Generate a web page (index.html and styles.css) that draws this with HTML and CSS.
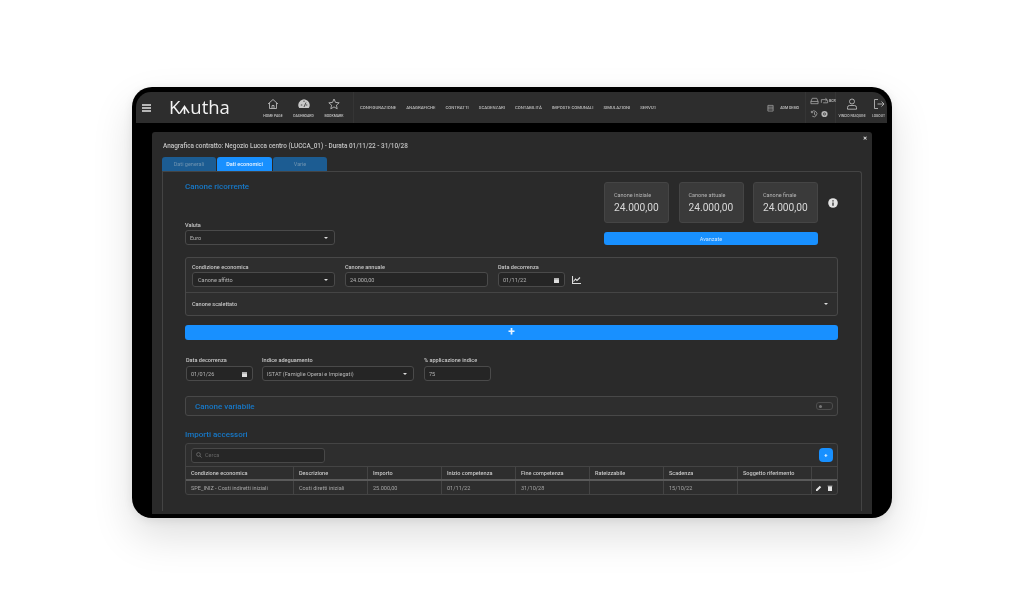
FILE: index.html
```html
<!DOCTYPE html>
<html lang="it">
<head>
<meta charset="utf-8">
<title>Kautha</title>
<link rel="stylesheet" href="styles.css">
</head>
<body>
<div class="device">
<div class="screen">
  <header class="nav">
    <svg class="burger" viewBox="0 0 9 8"><path d="M0 1h9M0 4h9M0 7h9"/></svg>
    <div class="logo"><span>K</span><svg class="logo-arrow" viewBox="0 0 12 11"><path d="M1 10 6 2.500 11 10M6 3v8"/></svg><span>utha</span></div>
    <div class="quick">
      <div class="qi"><svg viewBox="0 0 12 12"><path d="M1 6 6 1.500 11 6M2.500 5v5.500h7V5M5 10.500V7.500h2v3"/></svg><span>HOME PAGE</span></div>
      <div class="qi"><svg class="gauge" viewBox="0 0 12 12"><path class="fill" d="M1.200 10a5.600 5.600 0 1 1 9.600 0z"/><path class="mark" d="M6 9 8 4.500M2.800 7h1.500M7.800 7h1.500M6 2.600v1.400"/></svg><span>DASHBOARD</span></div>
      <div class="qi"><svg viewBox="0 0 12 12"><path d="M6 1l1.500 3.400 3.700.4-2.800 2.400.8 3.600L6 8.900l-3.200 1.900.8-3.600L.8 4.800l3.700-.4z"/></svg><span>BOOKMARK</span></div>
    </div>
    <nav class="menu">
      <a>CONFIGURAZIONE</a><a>ANAGRAFICHE</a><a>CONTRATTI</a><a>SCADENZARI</a><a>CONTABILITÀ</a><a>IMPOSTE COMUNALI</a><a>SIMULAZIONI</a><a>SERVIZI</a>
    </nav>
    <div class="adm"><svg viewBox="0 0 8 9"><path d="M1 1.500h6v6.500H1zM1 3.500h6M1 5.500h6"/></svg><span>ADM DEMO</span></div>
    <div class="tools">
      <div class="tool-row">
        <svg viewBox="0 0 10 8"><path d="M1 4.500 2.500 1h5L9 4.500V7H1zM1 4.500h8"/></svg>
        <svg viewBox="0 0 10 8"><path d="M1.500 6V2.500h6M6 1l2 1.500L6 4M8.500 3v3h-5"/></svg>
        <b>BCR</b>
      </div>
      <div class="tool-row">
        <svg viewBox="0 0 9 9"><path d="M1.500 2A3.300 3.300 0 1 1 2 7M1 1v2h2M4.500 2.500v2.500l1.500 1"/></svg>
        <svg viewBox="0 0 9 9"><circle class="fill" cx="4.500" cy="4.500" r="3.500"/><circle class="mark" cx="4.500" cy="4.500" r="1.200"/></svg>
      </div>
    </div>
    <div class="user qi"><svg viewBox="0 0 12 12"><circle cx="6" cy="3.500" r="2.500"/><path d="M1.500 11.200V9.500a2 2 0 0 1 2-2h5a2 2 0 0 1 2 2v1.700z"/></svg><span>VINCIO PASQUINI</span></div>
    <div class="logout qi"><svg viewBox="0 0 12 12"><path d="M5 1.500H1.500v9H5M4.500 6H11M8.500 3.500 11 6 8.500 8.500"/></svg><span>LOGOUT</span></div>
  </header>

  <main class="content">
    <section class="modal">
      <div class="modal-head">
        <h1>Anagrafica contratto: Negozio Lucca centro (LUCCA_01) - Durata 01/11/22 - 31/10/28</h1>
        <span class="close">✕</span>
      </div>
      <div class="tabs">
        <span class="tab t1">Dati generali</span>
        <span class="tab on">Dati economici</span>
        <span class="tab t3">Varie</span>
      </div>
      <div class="panel">
        <div class="top">
          <div class="top-left">
            <h2>Canone ricorrente</h2>
            <div class="field valuta">
              <label>Valuta</label>
              <div class="ctl"><span>Euro</span><i class="caret"></i></div>
            </div>
          </div>
          <div class="top-right">
            <div class="kpis">
              <div class="kpi"><small>Canone iniziale</small><strong>24.000,00</strong></div>
              <div class="kpi"><small>Canone attuale</small><strong>24.000,00</strong></div>
              <div class="kpi"><small>Canone finale</small><strong>24.000,00</strong></div>
            </div>
            <button class="adv">Avanzate</button>
          </div>
          <svg class="info" viewBox="0 0 10 10"><circle cx="5" cy="5" r="4.800" fill="#e4e4e4"/><path d="M5 2.200v1.200M5 4.400v3.400" stroke="#2a2a2a" stroke-width="1.300"/></svg>
        </div>

        <div class="cond">
          <div class="cond-row">
            <div class="field w143">
              <label>Condizione economica</label>
              <div class="ctl pad"><span>Canone affitto</span><i class="caret"></i></div>
            </div>
            <div class="field w143">
              <label>Canone annuale</label>
              <div class="ctl"><span>24.000,00</span></div>
            </div>
            <div class="field w67">
              <label>Data decorrenza</label>
              <div class="ctl"><span>01/11/22</span><svg class="cal" viewBox="0 0 6 7"><path d="M0 1h6v6H0z" fill="#ddd"/><path d="M0 2.200h6" stroke="#2a2a2a" stroke-width=".5"/></svg></div>
            </div>
            <svg class="chart" viewBox="0 0 9 8"><path d="M.5 0v7.500H9M1.500 5.500 3.500 3l1.500 1.500L8 1.500"/></svg>
          </div>
          <div class="cond-foot"><span>Canone scalettato</span><i class="caret"></i></div>
        </div>

        <button class="plus">+</button>

        <div class="adj">
          <div class="field w67">
            <label>Data decorrenza</label>
            <div class="ctl"><span>01/01/26</span><svg class="cal" viewBox="0 0 6 7"><path d="M0 1h6v6H0z" fill="#ddd"/><path d="M0 2.200h6" stroke="#2a2a2a" stroke-width=".5"/></svg></div>
          </div>
          <div class="field w152">
            <label>Indice adeguamento</label>
            <div class="ctl"><span>ISTAT (Famiglie Operai e Impiegati)</span><i class="caret"></i></div>
          </div>
          <div class="field w67">
            <label>% applicazione indice</label>
            <div class="ctl"><span>75</span></div>
          </div>
        </div>

        <div class="variable"><h3>Canone variabile</h3><span class="toggle"><i></i></span></div>

        <h2 class="acc">Importi accessori</h2>
        <div class="tbox">
          <div class="tbar">
            <div class="search"><svg viewBox="0 0 8 8"><circle cx="3.300" cy="3.300" r="2.500"/><path d="M5.200 5.200 7.500 7.500"/></svg><span>Cerca</span></div>
            <button class="add">+</button>
          </div>
          <div class="grid head">
            <span>Condizione economica</span><span>Descrizione</span><span>Importo</span><span>Inizio competenza</span><span>Fine competenza</span><span>Rateizzabile</span><span>Scadenza</span><span>Soggetto riferimento</span><span></span>
          </div>
          <div class="grid row">
            <span>SPE_INIZ - Costi indiretti iniziali</span><span>Costi diretti iniziali</span><span>25.000,00</span><span>01/11/22</span><span>31/10/28</span><span></span><span>15/10/22</span><span></span>
            <span class="acts">
              <svg viewBox="0 0 6 6"><path d="M0 6V4.600L3.800.8l1.400 1.400L1.400 6z" fill="#e4e4e4"/></svg>
              <svg viewBox="0 0 6 6"><path d="M1 1.500h4V6H1zM.5.700h5v.5h-5z" fill="#e4e4e4"/></svg>
            </span>
          </div>
        </div>
      </div>
    </section>
  </main>
</div>
</div>
</body>
</html>
```
FILE: styles.css
```css
* { box-sizing: border-box; }
html, body { margin: 0; height: 606px; overflow: hidden; background: #fff; }
body { padding: 87px 132px 0; font-family: Roboto, "Liberation Sans", sans-serif; color: #d9d9d9; }
h1, h2, h3 { margin: 0; font-weight: 500; }
svg { fill: none; stroke: currentColor; stroke-width: .8; flex: none; display: block; }
svg .fill { fill: currentColor; stroke: none; }
svg .mark { stroke: #2d2d2d; stroke-width: .8; }

.device { width: 760px; height: 431px; padding: 5px 5px 4px 4px; background: #000; border-radius: 20px; box-shadow: 0 18px 40px rgba(0,0,0,.13), 0 2px 10px rgba(0,0,0,.08); }
.screen { height: 100%; display: flex; flex-direction: column; border-radius: 15px; overflow: hidden; filter: blur(.45px); background: #000; }

.nav { height: 31px; flex: none; display: flex; align-items: center; background: #2d2d2d; color: #c8c8c8; }
.burger { width: 9px; height: 8px; margin-left: 6px; stroke-width: 1.400; color: #e4e4e4; }
.logo { display: flex; align-items: center; margin-left: 18px; width: 58px; font: 400 18.500px/1 "Open Sans", sans-serif; color: #f2f2f2; }
.logo-arrow { width: 11px; height: 10px; margin: 3px 0 0 -1px; stroke-width: 1.700; }
.quick { display: flex; margin-left: 35px; gap: 8.500px; height: 100%; padding-right: 8px; border-right: 1px solid #353535; }
.qi { display: flex; flex-direction: column; align-items: center; justify-content: center; gap: 4px; width: 22px; }
.qi svg { width: 12px; height: 12px; }
.qi span { font-size: 3.500px; font-weight: 500; white-space: nowrap; color: #c4c4c4; }
.menu { display: flex; gap: 10px; margin-left: 6px; flex: 1; font-size: 4.330px; font-weight: 500; color: #bdbdbd; white-space: nowrap; }
.adm { display: flex; align-items: center; gap: 6px; height: 100%; font-size: 3.600px; font-weight: 500; padding-right: 6px; border-right: 1px solid #353535; }
.adm svg { width: 7px; height: 8px; color: #aaa; }
.tools { width: 30px; height: 100%; padding: 5px 0 0 4px; display: flex; flex-direction: column; gap: 5px; border-right: 1px solid #353535; color: #b5b5b5; }
.tool-row { display: flex; align-items: center; gap: 1px; height: 8px; }
.tool-row svg { width: 9px; height: 8px; }
.tool-row b { font-size: 3.500px; margin-left: -1px; }
.user { width: 30px; margin-left: 1px; }
.logout { width: 17px; margin-left: 3px; }
.user span, .logout span { font-size: 3.400px; }

.content { flex: 1; min-height: 0; padding: 9px 15px 0 16px; }
.modal { height: 100%; background: #2a2a2a; border-radius: 3px 3px 0 0; padding: 0 10px; overflow: hidden; }
.modal-head { display: flex; justify-content: space-between; align-items: center; height: 25px; padding: 2px 0 0 1px; }
.modal-head h1 { font-size: 6.400px; color: #c4c4c4; }
.close { font-size: 5px; font-weight: 700; margin-right: -5px; margin-top: -15px; color: #eee; }

.tabs { display: flex; gap: 1px; height: 14px; }
.tab { width: 54px; display: flex; align-items: center; justify-content: center; border-radius: 3px 3px 0 0; font-size: 5.500px; background: #1c5c92; color: #6f93b0; }
.tab.on { background: #1890ff; color: #e8f3ff; font-weight: 500; width: 55px; }

.panel { height: 340px; border: 1px solid #444; border-bottom: 0; border-radius: 0 3px 0 0; padding: 0 23px 0 22px; }
h2 { font-size: 8px; color: #1779c9; }
.top { display: flex; height: 85px; padding-top: 10px; }
.top-left { width: 419px; }
.top h2 { line-height: 9px; }
.field { display: flex; flex-direction: column; gap: 2px; }
.field label { font-size: 5.550px; font-weight: 500; line-height: 6px; height: 6px; color: #c8c8c8; white-space: nowrap; }
.ctl { height: 15px; display: flex; align-items: center; justify-content: space-between; padding: 0 5px 0 4px; border: 1px solid #4a4a4a; border-radius: 3px; background: #252525; font-size: 5.550px; color: #b5b5b5; }
.ctl.pad { padding-left: 5px; }
.caret { width: 0; height: 0; border: 2px solid transparent; border-top-color: #ddd; border-bottom: 0; margin-right: 1px; display: block; }
.valuta { width: 150px; margin-top: 31px; }
.valuta .ctl { background: #272727; }

.top-right { width: 214px; display: flex; flex-direction: column; gap: 9px; }
.kpis { display: flex; justify-content: space-between; }
.kpi { width: 65px; height: 41px; padding: 9px 0 0 9px; display: flex; flex-direction: column; gap: 3px; background: #3a3a3a; border: 1px solid #454545; border-radius: 3px; }
.kpi small { font-size: 5.500px; line-height: 6px; color: #b5b5b5; }
.kpi strong { font-size: 10.200px; line-height: 13px; font-weight: 400; color: #d8d8d8; }
.adv { height: 13px; padding: 0; border: 0; border-radius: 3px; background: #1890ff; color: #cde6ff; font: 400 5.500px Roboto, sans-serif; }
.info { width: 10px; height: 10px; margin: 16px 0 0 10px; stroke: none; }

.cond { border: 1px solid #484848; border-radius: 3px; background: #2e2e2e; }
.cond-row { height: 35px; display: flex; align-items: flex-start; gap: 10px; padding: 6px 0 0 6px; border-bottom: 1px solid #454545; }
.w143 { width: 143px; }
.w67 { width: 67px; }
.w152 { width: 152px; margin-right: 1px; }
.cal { width: 5px; height: 6px; stroke: none; }
.chart { width: 9px; height: 8px; margin: 12px 0 0 -3px; color: #ddd; stroke-width: 1.100; }
.cond-foot { height: 22px; display: flex; align-items: center; justify-content: space-between; padding: 0 8px 0 6px; font-size: 5.550px; font-weight: 500; color: #c8c8c8; }

.plus { display: block; width: 100%; height: 15px; margin-top: 9px; padding: 0; border: 0; border-radius: 3px; background: #1890ff; color: #e8f3ff; font: 700 12px/15px Roboto, sans-serif; }

.adj { display: flex; gap: 9px; margin-top: 17px; padding-left: 1px; }
.adj .field { gap: 3px; }
.variable { height: 20px; margin-top: 15px; display: flex; align-items: center; justify-content: space-between; padding: 0 4px 0 9px; border: 1px solid #484848; border-radius: 3px; background: #2e2e2e; }
h3 { font-size: 8px; color: #1779c9; }
.toggle { width: 17px; height: 8px; padding: 2px 0 0 2px; border: 1px solid #4d4d4d; border-radius: 3px; }
.toggle i { display: block; width: 3px; height: 3px; border-radius: 50%; background: #777; }
.acc { margin-top: 14px; line-height: 10px; }

.tbox { margin-top: 3px; border: 1px solid #444; border-radius: 3px; background: #2e2e2e; }
.tbar { height: 22px; display: flex; align-items: center; justify-content: space-between; padding: 0 4px 0 5px; }
.search { width: 134px; height: 15px; display: flex; align-items: center; gap: 3px; padding: 0 4px; border: 1px solid #484848; border-radius: 3px; background: #262626; font-size: 5.550px; color: #666; }
.search svg { width: 6px; height: 6px; color: #888; }
.add { width: 14px; height: 14px; padding: 0; border: 0; border-radius: 4px; background: #1890ff; color: #fff; font: 700 6px/14px Roboto, sans-serif; }
.grid { display: grid; grid-template-columns: 107px repeat(7, 74px) 1fr; }
.grid span { display: flex; align-items: center; padding-left: 5px; border-left: 1px solid #444; font-size: 5.550px; white-space: nowrap; }
.grid span:first-child { border-left: 0; }
.head { height: 13px; border-top: 1px solid #444; font-weight: 500; color: #c8c8c8; }
.row { height: 15px; border-top: 2px solid #5a5a5a; color: #a5a5a5; }
.grid .acts { gap: 5px; padding-left: 4px; }
.acts svg { width: 6px; height: 6px; stroke: none; }
```
